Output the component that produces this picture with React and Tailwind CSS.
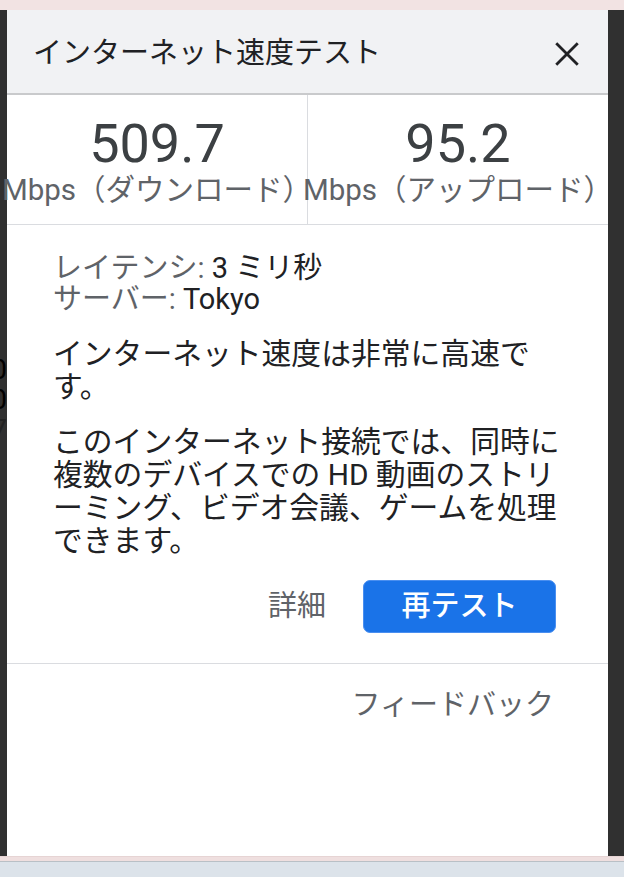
import React from "react";

const font = { fontFamily: 'Roboto, "Noto Sans CJK JP", sans-serif' };

const Stat = ({ value, label }) => (
  <div className="flex-1 min-w-0 flex flex-col items-center pt-[20px]">
    <div className="text-[54px] leading-[58px] text-[#3c4043]">{value}</div>
    <div className="text-[29.5px] leading-[34px] text-[#5f6368] whitespace-nowrap">{label}</div>
  </div>
);

const App = () => {
  return (
    <div className="w-[624px] h-[877px] flex flex-col overflow-hidden" style={font}>
      <div className="h-[10px] bg-[#f2e3e3] shrink-0" />

      <div className="flex flex-1 min-h-0">
        {/* page behind the panel, mostly hidden */}
        <div className="w-[7px] shrink-0 bg-[#303030] overflow-hidden flex flex-col items-end pt-[345px] text-[28px] leading-[30px] text-black">
          <span>0</span>
          <span>0</span>
          <span className="text-[#222]">7</span>
        </div>

        <div className="flex-1 min-w-0 bg-white flex flex-col">
          <div className="h-[85px] bg-[#f1f2f4] border-b-2 border-[#c9cacc] flex items-center justify-between pl-[26px] pr-[28px] pt-[5px] shrink-0">
            <span className="text-[29px] text-[#202124]">インターネット速度テスト</span>
            <svg width="26" height="26" viewBox="0 0 24 24" fill="none" stroke="#202124" strokeWidth="2.6" strokeLinecap="square">
              <path d="M3 3 L21 21 M21 3 L3 21" />
            </svg>
          </div>

          <div className="h-[130px] flex border-b border-[#dadce0] shrink-0">
            <Stat value="509.7" label="Mbps（ダウンロード）" />
            <div className="w-px bg-[#dadce0]" />
            <Stat value="95.2" label="Mbps（アップロード）" />
          </div>

          <div className="pl-[46px] pt-[28px] w-[560px]">
            <div className="text-[29px] leading-[31px] text-[#202124]">
              <div><span className="text-[#5f6368]">レイテンシ:</span> 3 ミリ秒</div>
              <div><span className="text-[#5f6368]">サーバー:</span> Tokyo</div>
            </div>
            <p className="mt-[22px] text-[29.8px] leading-[33px] text-[#202124]">
              インターネット速度は非常に高速です。
            </p>
            <p className="mt-[22px] text-[29.8px] leading-[33px] text-[#202124]">
              このインターネット接続では、同時に複数のデバイスでの HD 動画のストリーミング、ビデオ会議、ゲームを処理できます。
            </p>
          </div>

          <div className="flex items-center justify-end gap-[37px] pr-[52px] mt-[23px]">
            <button className="text-[29px] text-[#5f6368]">詳細</button>
            <button className="w-[193px] h-[53px] rounded-[7px] bg-[#1a73e8] border border-[#4a8ff0] text-white text-[29px] font-medium">
              再テスト
            </button>
          </div>

          <div className="mt-[30px] border-t border-[#dadce0] flex justify-end pr-[54px] pt-[20px]">
            <span className="text-[29px] text-[#5f6368]">フィードバック</span>
          </div>
        </div>

        <div className="w-[16px] shrink-0 bg-[#303030]" />
      </div>

      <div className="h-[5px] bg-[#efdfdf] border-t border-[#e6d4d4] shrink-0" />
      <div className="h-px bg-[#b9c0c6] shrink-0" />
      <div className="h-[15px] bg-[#dce3ea] shrink-0" />
    </div>
  );
};

export default App;
